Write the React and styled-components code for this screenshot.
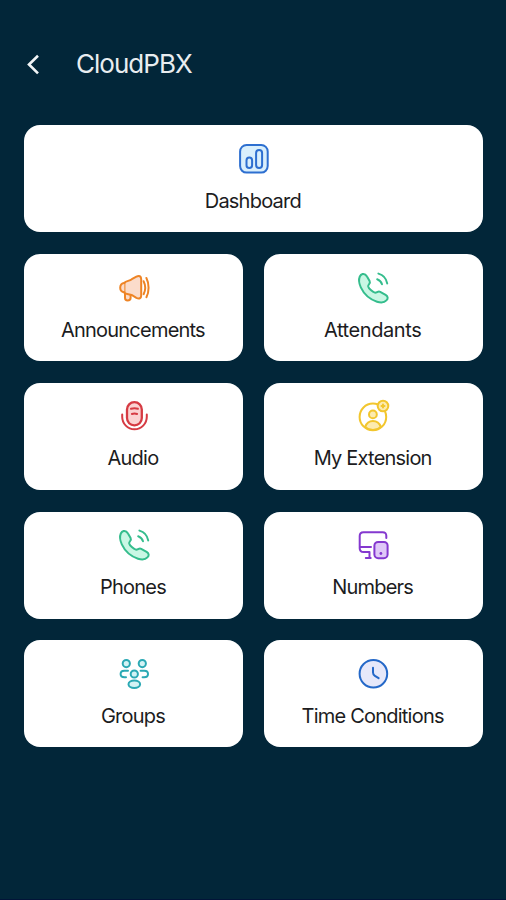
import React from 'react';
import styled, { createGlobalStyle } from 'styled-components';

const GlobalStyle = createGlobalStyle`
  * {
    box-sizing: border-box;
  }

  body {
    margin: 0;
    background-color: #022639;
    font-family: Inter, "Liberation Sans", sans-serif;
  }
`;

const Screen = styled.main`
  width: 506px;
  height: 900px;
  padding: 40px 23.2px 0 24.4px;
  background-color: #022639;
  border-bottom: 1px solid #011438;
`;

// Top bar with the back arrow
const Header = styled.header`
  display: flex;
  align-items: center;
  height: 48px;
  margin-bottom: 37.3px;
`;

const BackButton = styled.button`
  display: flex;
  width: 18px;
  height: 24px;
  margin-right: 33.5px;
  padding: 0;
  border: none;
  background: none;
  color: #f2f5f7;
  cursor: pointer;
`;

const Title = styled.h1`
  margin: 0;
  font-size: 26px;
  font-weight: 400;
  line-height: 32px;
  letter-spacing: -0.95px;
  color: #e9edf0;
`;

// Menu cards
const Menu = styled.nav`
  display: grid;
  grid-template-columns: 1fr 1fr;
  grid-auto-rows: 107px;
  gap: 21.75px 21px;
`;

const Card = styled.button`
  display: flex;
  flex-direction: column;
  align-items: center;
  grid-column: ${(props) => (props.$wide ? 'span 2' : 'auto')};
  padding: 15.5px 0 0;
  border: none;
  border-radius: 16px;
  background-color: #fff;
  font-family: inherit;
  cursor: pointer;
`;

const Icon = styled.svg`
  width: 36px;
  height: 36px;
  flex-shrink: 0;
  fill: none;
  stroke: ${(props) => props.$color};
  stroke-width: 2;
  stroke-linecap: round;
  stroke-linejoin: round;

  .tint {
    fill: ${(props) => props.$tint};
  }

  .dot {
    fill: ${(props) => props.$color};
    stroke: none;
  }
`;

const Label = styled.span`
  margin-top: 11px;
  padding-right: 1.6px;
  font-size: 20px;
  line-height: 26px;
  letter-spacing: ${(props) => props.$spacing || '-0.78px'};
  color: #1c1c1e;
  white-space: nowrap;
`;

const handset = (
  <>
    <path
      className="tint"
      d="M7.6 4C9.6 3.6 11 4.8 12 6.6L14.6 11C16 13.6 12.8 14.4 13.2 16.4C13.8 18.6 17.4 22 19.8 22.6C22 23 22.8 20.6 25.2 21.8L30.6 24.8C33.2 26.4 33.2 28.6 31.4 30.4C29.2 32.8 25.8 32.9 22 31.7C15.2 29.5 9 24.2 5.8 17.4C4 13.4 3.6 9.3 4.8 6.5C5.5 5 6.4 4.3 7.6 4Z"
    />
    <path d="M22.2 9.2C24.6 10 26.3 11.8 27 14.3" />
    <path d="M23.4 3.6C28 4.8 31.3 8.4 32.2 13.4" />
  </>
);

const icons = {
  dashboard: (
    <>
      <rect className="tint" x="4.1" y="4" width="27.6" height="27.6" rx="6.5" />
      <rect x="10.5" y="16.6" width="5.6" height="10.4" rx="2.8" />
      <rect x="20.1" y="9" width="6" height="18" rx="3" />
    </>
  ),
  announcements: (
    <>
      <path className="tint" d="M9 22V27.8C9 30 10.2 30.6 11.6 30.6S14.6 29.8 14.6 27.8V23" />
      <path
        className="tint"
        d="M8.4 12.7C10.2 10.8 13.4 11 15.8 9.2L20.4 6.6C23.2 5.2 25.2 6.2 25.2 9.2V25.4C25.2 28.4 23.2 29.2 20.4 27.8L16 25.2C13.4 23.7 10.2 24.6 8.4 22.8Z"
      />
      <path className="tint" d="M8.4 13.1C5.4 13.4 4.2 15.4 4.2 17.8S5.4 22 8.4 22.3" />
      <path d="M27.6 11.2C29.5 15 29.5 20.4 27.6 24.2" />
      <path d="M30.4 8C33.3 13.8 33.3 21.6 30.4 27.2" />
    </>
  ),
  phone: handset,
  audio: (
    <>
      <rect className="tint" x="11" y="4.2" width="14.8" height="23.2" rx="7.3" strokeWidth="2.3" />
      <path d="M6.2 16.6V18.7A12.3 12.6 0 0 0 30.8 18.7V16.6" />
      <path d="M15 10.8Q18.5 9.5 21.9 10.8" />
      <path d="M15.9 16Q18.5 15 21.1 16" />
    </>
  ),
  extension: (
    <>
      <circle cx="17.9" cy="18.9" r="13.3" />
      <circle className="tint" cx="17.9" cy="16.4" r="3.9" />
      <path className="tint" d="M10.2 28.9C11.6 24.8 14.2 23 17.9 23S24.4 24.8 25.8 28.9C21.4 33.1 14.4 33.1 10.2 28.9Z" />
      <circle className="tint" cx="28" cy="8" r="5.3" />
      <path d="M28 6.5V9.5M26.5 8H29.5" />
    </>
  ),
  numbers: (
    <>
      <path d="M31.3 11V8.8C31.3 6.4 30.1 5.2 27.7 5.2H8.5C6 5.2 4.7 6.5 4.7 9V21.2C4.7 23.7 6 25 8.5 25H14.5V31" />
      <path d="M5.2 19.9H16M10.8 31.1H15.7" />
      <rect className="tint" x="19.4" y="14.9" width="13.2" height="16.3" rx="3.7" />
      <circle className="dot" cx="25.9" cy="26.5" r="1.4" />
    </>
  ),
  groups: (
    <>
      <circle className="tint" cx="10.3" cy="7.6" r="3.6" />
      <circle className="tint" cx="26.3" cy="7.6" r="3.6" />
      <circle className="tint" cx="18.3" cy="18" r="3.6" />
      <ellipse className="tint" cx="18.3" cy="28.3" rx="5.8" ry="3.7" />
      <path d="M12 14.7H8.3C5.8 14.7 4.6 16 4.6 18S6 21.2 8.5 21.2H10" />
      <path d="M24.6 14.7H28.3C30.8 14.7 32 16 32 18S30.6 21.2 28.1 21.2H26.6" />
    </>
  ),
  clock: (
    <>
      <circle className="tint" cx="18.4" cy="17.8" r="13.8" />
      <path d="M18 11.7V16.6C18 18.1 18.5 19 19.9 19.9L23.6 22.2" />
    </>
  ),
};

const items = [
  { label: 'Dashboard', icon: 'dashboard', color: '#2d6fd0', tint: '#d9effc', wide: true },
  { label: 'Announcements', icon: 'announcements', color: '#ee8425', tint: '#fbdccb' },
  { label: 'Attendants', icon: 'phone', color: '#35bd8d', tint: '#c9f7e4', spacing: '-0.4px' },
  { label: 'Audio', icon: 'audio', color: '#d63b43', tint: '#fbd3d2' },
  { label: 'My Extension', icon: 'extension', color: '#f2c62e', tint: '#fcebb0' },
  { label: 'Phones', icon: 'phone', color: '#35bd8d', tint: '#c9f7e4' },
  { label: 'Numbers', icon: 'numbers', color: '#8438cf', tint: '#dfc8f8' },
  { label: 'Groups', icon: 'groups', color: '#2ba9b4', tint: '#d3f3f5' },
  { label: 'Time Conditions', icon: 'clock', color: '#2468c8', tint: '#e6e8fa' },
];

const App = () => {
  return (
    <>
      <GlobalStyle />
      <Screen>
        <Header>
          <BackButton aria-label="Back">
            <svg width="18" height="24" viewBox="0 0 18 24" fill="none">
              <path d="M14 3.8L5 12.5L14 21.4" stroke="currentColor" strokeWidth="2.6" />
            </svg>
          </BackButton>
          <Title>CloudPBX</Title>
        </Header>
        <Menu>
          {items.map((item) => (
            <Card key={item.label} $wide={item.wide}>
              <Icon viewBox="0 0 36 36" $color={item.color} $tint={item.tint}>
                {icons[item.icon]}
              </Icon>
              <Label $spacing={item.spacing}>{item.label}</Label>
            </Card>
          ))}
        </Menu>
      </Screen>
    </>
  );
};

export default App;
